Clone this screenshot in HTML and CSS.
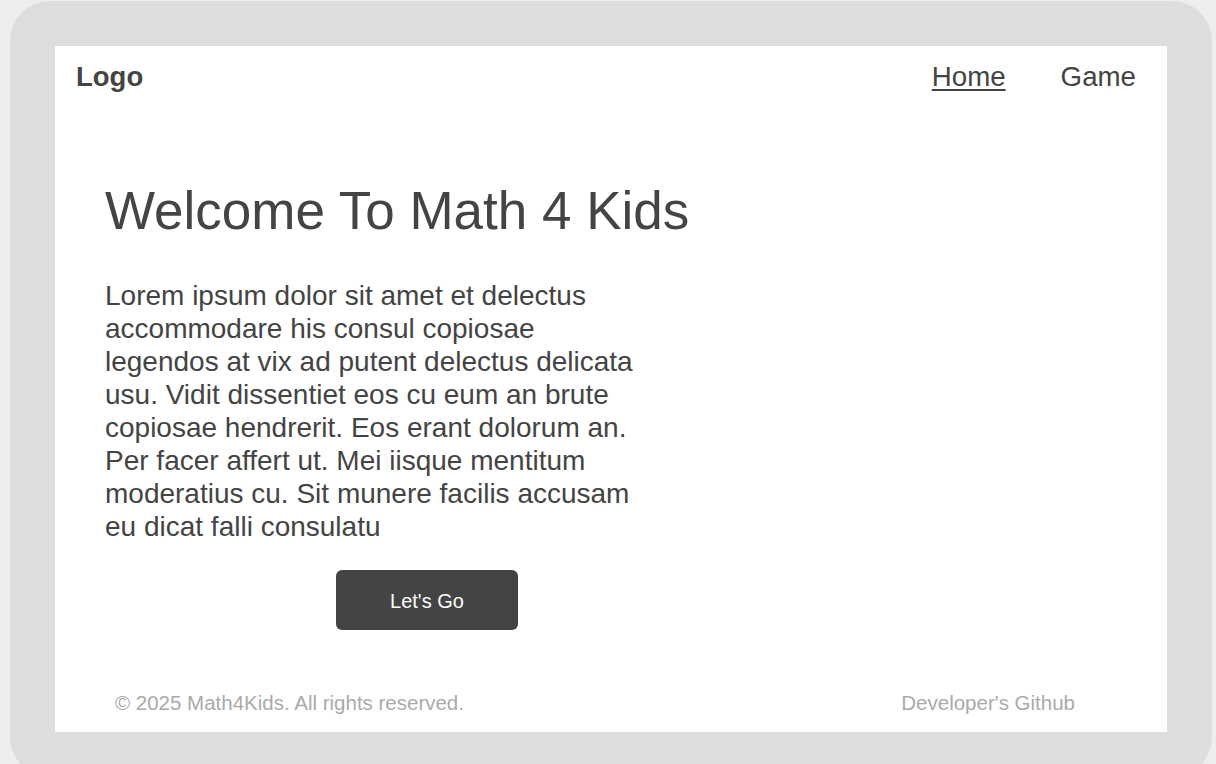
FILE: index.html
```html
<!DOCTYPE html>
<html lang="en">
<head>
<meta charset="utf-8">
<title>Math 4 Kids</title>
<link rel="stylesheet" href="styles.css">
</head>
<body>
<div class="frame">
  <div class="page">
    <header class="header">
      <div class="logo">Logo</div>
      <nav class="nav">
        <a class="nav-link active" href="#">Home</a>
        <a class="nav-link" href="#">Game</a>
      </nav>
    </header>
    <main class="hero">
      <div class="hero-col">
        <h1 class="title">Welcome To Math 4 Kids</h1>
        <p class="lead">Lorem ipsum dolor sit amet et delectus accommodare his consul copiosae legendos at vix ad putent delectus delicata usu. Vidit dissentiet eos cu eum an brute copiosae hendrerit. Eos erant dolorum an. Per facer affert ut. Mei iisque mentitum moderatius cu. Sit munere facilis accusam eu dicat falli consulatu</p>
        <div class="actions"><button class="btn">Let's Go</button></div>
      </div>
    </main>
    <footer class="footer">
      <span>© 2025 Math4Kids. All rights reserved.</span>
      <a class="footer-link" href="#">Developer's Github</a>
    </footer>
  </div>
</div>
</body>
</html>
```
FILE: styles.css
```css
html, body {
  margin: 0;
  padding: 0;
  background: #eeeeee;
  font-family: "Liberation Sans", Arial, sans-serif;
  color: #444444;
  overflow: hidden;
}
.frame {
  margin: 1px 4px 0 10px;
  background: #dddddd;
  border-radius: 40px;
  padding: 45px 45px 45px 45px;
}
.page {
  background: #ffffff;
  height: 686px;
  display: flex;
  flex-direction: column;
}
.header {
  display: flex;
  justify-content: space-between;
  align-items: center;
  padding: 14px 31px 0 21px;
  height: 34px;
}
.logo {
  font-weight: bold;
  font-size: 27.5px;
}
.nav {
  display: flex;
  gap: 55px;
}
.nav-link {
  font-size: 27.7px;
  color: #444444;
  text-decoration: none;
}
.nav-link.active {
  text-decoration: underline;
  text-underline-offset: 3px;
}
.hero {
  flex: 1;
  padding: 0 0 0 50px;
}
.hero-col {
  width: 644px;
}
.title {
  margin: 87px 0 0 0;
  font-size: 53px;
  font-weight: normal;
  line-height: 60px;
}
.lead {
  margin: 38px 0 0 0;
  width: 540px;
  font-size: 28px;
  line-height: 33px;
}
.actions {
  display: flex;
  justify-content: center;
  margin-top: 27px;
}
.btn {
  width: 182px;
  height: 60px;
  border: none;
  border-radius: 6px;
  background: #444444;
  color: #ffffff;
  font-family: "Liberation Sans", Arial, sans-serif;
  font-size: 20px;
  padding: 2px 0 0 0;
}
.footer {
  display: flex;
  justify-content: space-between;
  padding: 0 92px 17px 60px;
  font-size: 20.5px;
  color: #aaaaaa;
}
.footer-link {
  color: #aaaaaa;
  text-decoration: none;
}
```
